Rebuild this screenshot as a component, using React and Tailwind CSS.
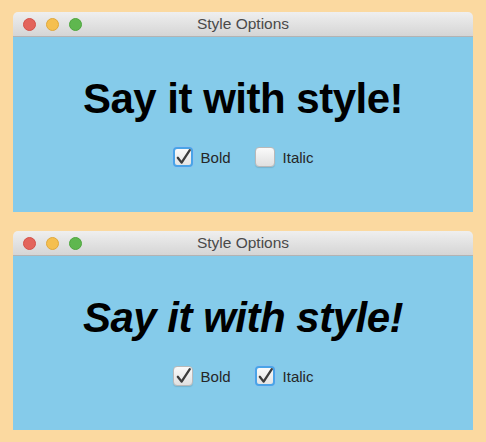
import React from "react";

function Check() {
  return (
    <svg viewBox="0 0 20 20" className="absolute left-0 top-0 w-[20px] h-[20px]" fill="none">
      <path d="M4.5 10.5 L8.5 16 L16.5 2.5" stroke="#3a3a3a" strokeWidth="2.4" strokeLinecap="round" strokeLinejoin="round" />
    </svg>
  );
}

function Box({ checked, focused, label }) {
  return (
    <div className="flex items-center gap-[8px]">
      <div
        className={
          focused
            ? "relative w-[20px] h-[20px] rounded-[4px] border-[2px] border-[#4aa3e8] bg-gradient-to-b from-[#fafafa] to-[#e4e4e4] shadow-[0_0_0_1px_#8cc4ee]"
            : "relative w-[20px] h-[20px] rounded-[4px] border border-[#b9b9b9] bg-gradient-to-b from-[#fafafa] to-[#e0e0e0] shadow-[0_1px_1px_rgba(0,0,0,0.12)]"
        }
      >
        {checked && (
          <svg viewBox="0 0 20 20" className={focused ? "absolute left-[-2px] top-[-2px] w-[20px] h-[20px]" : "absolute left-[-1px] top-[-1px] w-[20px] h-[20px]"} fill="none">
            <path d="M4.8 10.8 L8.6 15.6 L16.8 3.2" stroke="#3c3c3c" strokeWidth="2.3" strokeLinecap="round" strokeLinejoin="round" />
          </svg>
        )}
      </div>
      <span className="text-[15px] text-[#262626] leading-none" style={{}}>{label}</span>
    </div>
  );
}

function Window({ italic, bodyH }) {
  return (
    <div className="rounded-t-[5px] overflow-hidden">
      <div className="relative h-[25px] bg-gradient-to-b from-[#efefef] to-[#d5d5d5] border-b border-[#b3b3b3] flex items-center justify-center">
        <div className="absolute left-[10px] top-[6px] flex gap-[10px]">
          <div className="w-[13px] h-[13px] rounded-full bg-[#e3645b] border border-[#d45048]" />
          <div className="w-[13px] h-[13px] rounded-full bg-[#f5bf4f] border border-[#e0a83a]" />
          <div className="w-[13px] h-[13px] rounded-full bg-[#5fb74f] border border-[#4ea63e]" />
        </div>
        <span className="text-[15.5px] text-[#4a4a4a] leading-none">Style Options</span>
      </div>
      <div className={(bodyH === 175 ? "h-[175px]" : "h-[174px]") + " bg-[#85cbea] flex flex-col items-center pt-[41px]"}>
        <div
          className={
            "text-[42px] leading-none font-bold tracking-[-0.5px] text-black " + (italic ? "italic" : "")
          }
        >
          Say it with style!
        </div>
        <div className="mt-[27px] flex items-center gap-[24px]">
          <Box checked={true} focused={!italic} label="Bold" />
          <Box checked={italic} focused={italic} label="Italic" />
        </div>
      </div>
    </div>
  );
}

export default function App() {
  return (
    <div
      className="w-[486px] h-[442px] bg-[#fbd9a0] px-[13px] pt-[12px] flex flex-col gap-[19px]"
      style={{ fontFamily: '"Liberation Sans", Arial, sans-serif' }}
    >
      <Window italic={false} bodyH={175} />
      <Window italic={true} bodyH={174} />
    </div>
  );
}
